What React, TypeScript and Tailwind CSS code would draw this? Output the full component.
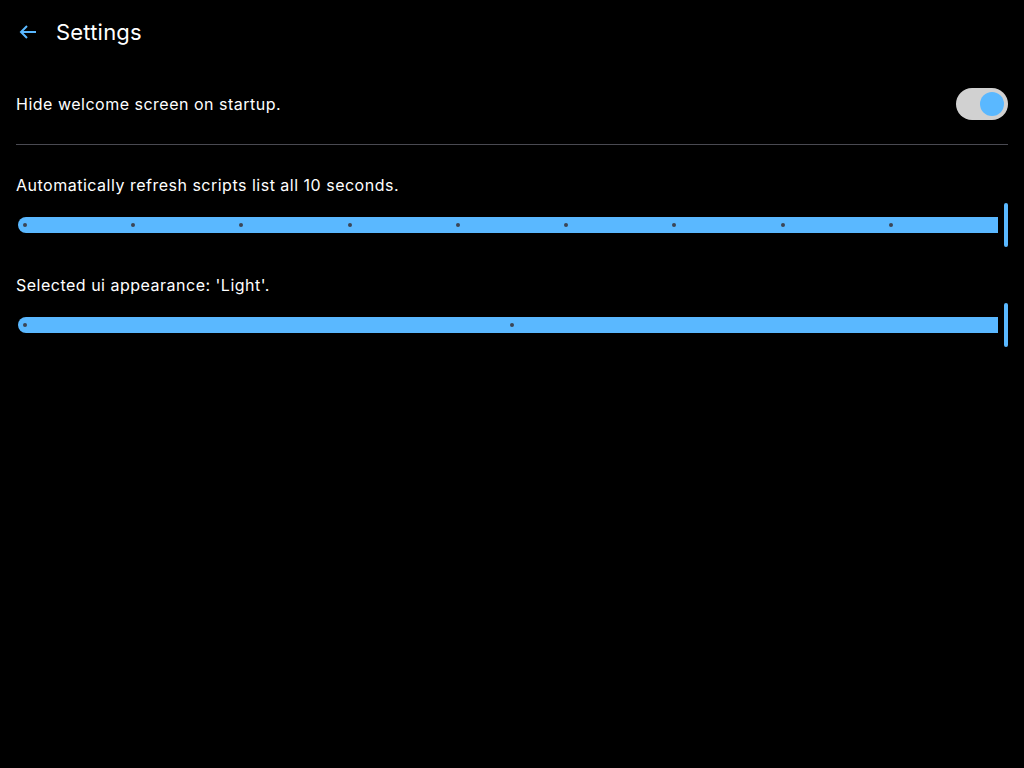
import React from "react";

function Slider({ ticks }: { ticks: number }) {
  const dots = Array.from({ length: ticks - 1 });
  return (
    <div className="relative h-[44px] w-full">
      <div className="absolute left-[2px] right-[10px] top-[14px] h-[16px] rounded-l-full rounded-r-[3px] bg-[#5ab8ff]" />
      {dots.map((_, i) => (
        <div
          key={i}
          className="absolute top-[20px] h-[4px] w-[4px] rounded-full bg-[#3c4656]"
          style={{ left: `calc(7px + (100% - 18px) * ${i / (ticks - 1)})` }}
        />
      ))}
      <div className="absolute right-0 top-0 h-[44px] w-[4px] rounded-full bg-[#5ab8ff]" />
    </div>
  );
}

export default function App() {
  return (
    <div
      className="min-h-[768px] w-full bg-black text-white"
      style={{ fontFamily: "Inter, 'Noto Sans', sans-serif" }}
    >
      <div className="flex h-[64px] items-center px-4">
        <svg width="24" height="24" viewBox="0 0 24 24" className="text-[#5ab8ff]">
          <path d="M20 12H5M11 6l-6 6 6 6" fill="none" stroke="currentColor" strokeWidth="2" />
        </svg>
        <div className="ml-4 text-[22px] leading-none tracking-[0.2px]">Settings</div>
      </div>
      <div className="px-4">
        <div className="flex h-[80px] items-center justify-between">
          <div className="text-[16px] tracking-[0.5px]">Hide welcome screen on startup.</div>
          <div className="relative h-[32px] w-[52px] rounded-full bg-[#d1d1d1]">
            <div className="absolute right-[4px] top-[4px] h-[24px] w-[24px] rounded-full bg-[#5ab8ff]" />
          </div>
        </div>
        <div className="h-px bg-[#4a4a52]" />
        <div className="pt-[30px]">
          <div className="text-[16px] leading-[20px] tracking-[0.5px]">Automatically refresh scripts list all 10 seconds.</div>
          <div className="mt-[8px]">
            <Slider ticks={10} />
          </div>
        </div>
        <div className="pt-[28px]">
          <div className="text-[16px] leading-[20px] tracking-[0.5px]">Selected ui appearance: 'Light'.</div>
          <div className="mt-[8px]">
            <Slider ticks={3} />
          </div>
        </div>
      </div>
    </div>
  );
}
